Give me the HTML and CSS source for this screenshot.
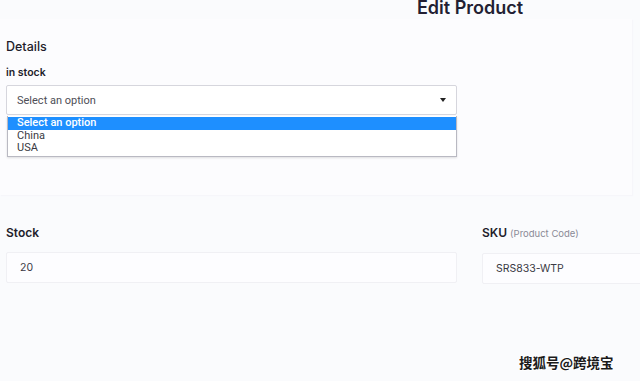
FILE: index.html
```html
<!DOCTYPE html>
<html>
<head>
<meta charset="utf-8">
<link rel="stylesheet" href="styles.css">
</head>
<body>
<div class="page">
  <h1 class="title">Edit Product</h1>
  <section class="card">
    <h2 class="section-title">Details</h2>
    <div class="label">in stock</div>
    <div class="select">
      <span class="select-text">Select an option</span>
      <span class="arrow"></span>
    </div>
    <ul class="options">
      <li class="option active">Select an option</li>
      <li class="option">China</li>
      <li class="option">USA</li>
    </ul>
  </section>
  <div class="fields">
    <div class="field">
      <div class="field-label">Stock</div>
      <div class="input">20</div>
    </div>
    <div class="field">
      <div class="field-label">SKU <span class="hint">(Product Code)</span></div>
      <div class="input">SRS833-WTP</div>
    </div>
  </div>
</div>
<div class="watermark">搜狐号@跨境宝</div>
</body>
</html>
```
FILE: styles.css
```css
html, body {
  margin: 0;
  padding: 0;
  height: 100%;
  overflow: hidden;
}
body {
  background: #fafbfd;
  font-family: Inter, "Noto Sans", sans-serif;
  color: #1f1d2b;
  position: relative;
}
.page {
  width: 928px;
  padding: 0 6px;
}
.title {
  margin: -3px 0 0;
  font-size: 18px;
  line-height: 22px;
  font-weight: 600;
  text-align: center;
  color: #221f33;
}
.card {
  width: 626px;
  margin-left: -6px;
  padding: 20px 0 38px 6px;
  background: #fcfcfe;
  box-shadow: 1px 1px 1px rgba(230, 230, 240, 0.2);
}
.section-title {
  margin: 0;
  font-size: 12.5px;
  line-height: 16px;
  font-weight: 500;
  color: #1f1d2b;
}
.label {
  margin-top: 11px;
  font-size: 10.5px;
  line-height: 14px;
  font-weight: 600;
  color: #1f1d2b;
}
.select {
  margin-top: 5px;
  width: 451px;
  height: 30px;
  box-sizing: border-box;
  border: 1px solid #d6d6dd;
  border-radius: 2px;
  background: #fff;
  display: flex;
  align-items: center;
  justify-content: space-between;
  padding: 0 10px 0 10px;
  font-family: Roboto, "Liberation Sans", sans-serif;
  font-size: 11px;
  color: #4e4e56;
}
.arrow {
  width: 0;
  height: 0;
  border-left: 3.5px solid transparent;
  border-right: 3.5px solid transparent;
  border-top: 4px solid #222;
}
.options {
  list-style: none;
  margin: 1px 0 0 1px;
  padding: 1px 0;
  width: 450px;
  box-sizing: border-box;
  border: 1px solid #b9b9c2;
  border-top: none;
  background: #fff;
  font-family: Roboto, "Liberation Sans", sans-serif;
  font-size: 11px;
  color: #3a3a42;
  box-shadow: 0 1px 2px rgba(0, 0, 0, 0.12);
}
.option {
  height: 12.7px;
  line-height: 12.7px;
  padding-left: 9px;
}
.option.active {
  background: #1e8fff;
  color: #fff;
  font-weight: 500;
}
.fields {
  display: grid;
  grid-template-columns: 451px 451px;
  column-gap: 25px;
  margin-top: 30px;
}
.field-label {
  font-size: 12px;
  line-height: 15px;
  font-weight: 600;
  color: #1f1d2b;
}
.hint {
  font-size: 9.5px;
  font-weight: 400;
  color: #8a8a96;
}
.input {
  margin-top: 12px;
  height: 31px;
  box-sizing: border-box;
  border: 1px solid #f0f0f4;
  border-radius: 2px;
  background: #fdfdff;
  display: flex;
  align-items: center;
  padding-left: 13px;
  font-size: 10.5px;
  color: #3a3a44;
}
.watermark {
  position: absolute;
  left: 519px;
  top: 353px;
  font-family: "Noto Sans CJK SC", sans-serif;
  font-size: 13.5px;
  line-height: 18px;
  font-weight: 700;
  color: #1a1a1a;
  text-shadow: 1px 0 0 #fff, -1px 0 0 #fff, 0 1px 0 #fff, 0 -1px 0 #fff;
}
```
